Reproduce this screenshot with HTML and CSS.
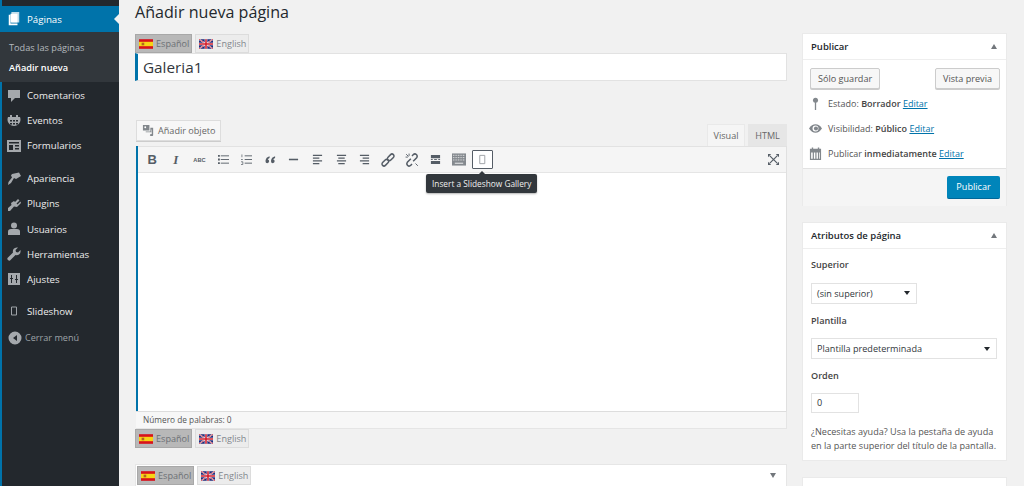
FILE: index.html
```html
<!DOCTYPE html>
<html lang="es">
<head>
<meta charset="utf-8">
<title>Añadir nueva página</title>
<link rel="stylesheet" href="styles.css">
</head>
<body>
<svg class="defs" width="0" height="0" aria-hidden="true">
  <symbol id="flag-es" viewBox="0 0 16 11"><rect width="16" height="11" fill="#d8121b"/><rect y="3" width="16" height="5" fill="#f7d316"/><rect x="3" y="4" width="3" height="3" fill="#b5651d"/></symbol>
  <symbol id="flag-en" viewBox="0 0 16 11"><rect width="16" height="11" rx="1.500" fill="#1f2a7a"/><path d="M0 0l16 11M16 0L0 11" stroke="#fff" stroke-width="1.500"/><path d="M0 0l16 11M16 0L0 11" stroke="#d01c2a" stroke-width=".8"/><path d="M8 0v11M0 5.500h16" stroke="#fff" stroke-width="3"/><path d="M8 0v11M0 5.500h16" stroke="#d01c2a" stroke-width="1.800"/></symbol>
</svg>
<div class="page">
  <nav class="side">
    <div class="active"><svg class="ic" viewBox="0 0 14 16"><path d="M4 0h9v12H4z" fill="#fff" opacity=".75"/><path d="M1 3h2v10h8v2H1z" fill="#fff"/><path d="M3 2h8v10H3z" fill="#fff"/></svg><span>Páginas</span></div>
    <div class="sub"><a>Todas las páginas</a><a class="cur">Añadir nueva</a></div>
    <div class="item"><svg class="ic" viewBox="0 0 14 14"><path d="M1 1h12v8H8l-4 4V9H1z"/></svg><span>Comentarios</span></div>
    <div class="item"><svg class="ic" viewBox="0 0 14 14"><path d="M3 1h2v2h4V1h2v2h2a6.500 6.500 0 1 1-12 0h2zM3 6v1.500h2V6zm3 0v1.500h2V6zm3 0v1.500h2V6zM3 9v1.500h2V9zm3 0v1.500h2V9zm3 0v1.500h2V9z" fill-rule="evenodd"/></svg><span>Eventos</span></div>
    <div class="item"><svg class="ic" viewBox="0 0 14 14"><path d="M0 1h14v12H0zm2 2v1.500h10V3zm0 3v5h4V6zm6 0v1.500h4V6zm0 3v1.500h4V9z" fill-rule="evenodd"/></svg><span>Formularios</span></div>
    <div class="item gap"><svg class="ic" viewBox="0 0 14 14"><path d="M5 2l7-1.500L14 4 9 7 7 6 4 11 1 13l.5-3 3.500-4.500-1-2z"/></svg><span>Apariencia</span></div>
    <div class="item"><svg class="ic" viewBox="0 0 14 14"><path d="M7 4l1 1 3-3 1.500 1.500-3 3 1 1 3-3L14 6l-3 3-1 1-3-.5L3 14H1v-3l3.500-3L4 6z"/></svg><span>Plugins</span></div>
    <div class="item"><svg class="ic" viewBox="0 0 14 14"><circle cx="7" cy="3.500" r="3"/><path d="M1 13V9.500Q1 7 4 7h6q3 0 3 2.500V13z"/></svg><span>Usuarios</span></div>
    <div class="item"><svg class="ic" viewBox="0 0 14 14"><path d="M13.500 3L11 5.500 9 5l-.5-2L11 .5Q8 0 6.500 2 5.500 4 6 5.500L.5 11q-.5 1 .5 2t2 .5L8.500 8q2 .5 3.500-.5 2-1.500 1.500-4.500z"/></svg><span>Herramientas</span></div>
    <div class="item"><svg class="ic" viewBox="0 0 14 14"><path d="M1 1h12v12H1zm3 2v3H3v1h1v4h1V7h1V6H5V3zm5 0v4H8v1h1v3h1V8h1V7h-1V3z" fill-rule="evenodd"/></svg><span>Ajustes</span></div>
    <div class="item gap-last"><svg class="ic" viewBox="0 0 14 14"><path d="M4.500 3h5v8h-5z" fill="none" stroke="#9ea3a8"/></svg><span>Slideshow</span></div>
    <div class="collapse"><svg class="ic" viewBox="0 0 14 14"><path d="M7 .5a6.500 6.500 0 1 1 0 13 6.500 6.500 0 0 1 0-13zM9 4L5 7l4 3z" fill-rule="evenodd"/></svg><span>Cerrar menú</span></div>
  </nav>

  <main class="main">
    <section class="left">
      <h1>Añadir nueva página</h1>
      <div class="langs">
        <span class="lang on"><svg class="flag"><use href="#flag-es"/></svg>Español</span>
        <span class="lang"><svg class="flag"><use href="#flag-en"/></svg>English</span>
      </div>
      <div class="title-input">Galeria1</div>
      <div class="editor-top">
        <span class="btn-media"><svg class="media-ic" viewBox="0 0 14 14"><path d="M1 1h7v6H1zM4 8h5V4h3v8q0 1-2 1t-1.500-1.200T10.500 11V6H10v3H4z" fill="#82878c"/><circle cx="3.500" cy="3.500" r="1" fill="#fff"/></svg>Añadir objeto</span>
        <div class="tabs"><span class="tab tab-on">Visual</span><span class="tab tab-html">HTML</span></div>
      </div>
      <div class="editor">
        <div class="toolbar">
          <span class="tb tb-b">B</span>
          <span class="tb tb-i">I</span>
          <span class="tb tb-abc">ABC</span>
          <span class="tb"><svg viewBox="0 0 12 12"><path d="M3 2h9M3 6h9M3 10h9" stroke="#555d66"/><path d="M0 2h2M0 6h2M0 10h2" stroke="#555d66" stroke-width="2"/></svg></span>
          <span class="tb"><svg viewBox="0 0 12 12"><path d="M4 2h8M4 6h8M4 10h8" stroke="#555d66"/><path d="M1 .5v3M0 6h2M0 8.500h2v3H0" stroke="#555d66" fill="none" stroke-width=".8"/></svg></span>
          <span class="tb"><svg viewBox="0 0 12 12"><path d="M5 2.500Q1 3.500.5 7.500q0 2.500 2 2.500T4.500 8 3 6q.3-1 2-1.700zM11 2.500Q7 3.500 6.500 7.500q0 2.500 2 2.500t2-2-1.500-2q.3-1 2-1.700z" fill="#555d66"/></svg></span>
          <span class="tb"><svg viewBox="0 0 12 12"><path d="M1 6h10" stroke="#555d66" stroke-width="1.700"/></svg></span>
          <span class="tb"><svg viewBox="0 0 12 12"><path d="M1 1.500h10M1 4.500h7M1 7.500h10M1 10.500h7" stroke="#555d66" stroke-width="1.200"/></svg></span>
          <span class="tb"><svg viewBox="0 0 12 12"><path d="M1 1.500h10M2.500 4.500h7M1 7.500h10M2.500 10.500h7" stroke="#555d66" stroke-width="1.200"/></svg></span>
          <span class="tb"><svg viewBox="0 0 12 12"><path d="M1 1.500h10M4 4.500h7M1 7.500h10M4 10.500h7" stroke="#555d66" stroke-width="1.200"/></svg></span>
          <span class="tb"><svg class="tb-lg" viewBox="0 0 12 12"><g fill="none" stroke="#555d66" stroke-width="1.300"><rect x="-3" y="-1.700" width="6.500" height="3.400" rx="1.700" transform="translate(3.500 8.500) rotate(-45)"/><rect x="-3.500" y="-1.700" width="6.500" height="3.400" rx="1.700" transform="translate(8.500 3.500) rotate(-45)"/></g></svg></span>
          <span class="tb"><svg class="tb-lg" viewBox="0 0 12 12"><g fill="none" stroke="#555d66" stroke-width="1.300"><path d="M5 5L2 8q-1 1.500.3 2.700t2.700-.2l1-1"/><path d="M7 7l3-3q1-1.500-.3-2.700T7 1.500l-1 1"/></g><path d="M1 1l2 2M.5 3.500h2M3.500.5v2M9 9l2 2" stroke="#555d66" stroke-width=".8"/></svg></span>
          <span class="tb"><svg viewBox="0 0 12 12"><path d="M1 1h10v3.500H1zM1 7.500h10V11H1z" fill="#555d66"/><path d="M1 6h2M4.500 6h3M9 6h2" stroke="#555d66"/></svg></span>
          <span class="tb"><svg class="tb-wide" viewBox="0 0 15 13"><path d="M0 0h15v13H0z" fill="#84898e"/><path d="M1 2h13M1 4.500h13M1 7h13" stroke="#f5f5f5" stroke-dasharray="1 .8" stroke-width=".9"/><path d="M3 10.500h9" stroke="#f5f5f5"/></svg></span>
          <span class="tb tb-slide"><svg viewBox="0 0 12 12"><path d="M3 1.500h5.500v9H3z" fill="none" stroke="#9a9ea3"/></svg></span>
          <span class="tb tb-full"><svg viewBox="0 0 12 12"><path d="M0 0h3.500L0 3.500zM12 0v3.500L8.500 0zM0 12V8.500L3.500 12zM12 12H8.500L12 8.500z" fill="#555d66"/><path d="M2 2l8 8M10 2l-8 8" stroke="#555d66" stroke-width="1.300"/></svg></span>
          <span class="tooltip">Insert a Slideshow Gallery</span>
        </div>
        <div class="editor-body"></div>
      </div>
      <div class="status">Número de palabras: 0</div>
      <div class="langs">
        <span class="lang on"><svg class="flag"><use href="#flag-es"/></svg>Español</span>
        <span class="lang"><svg class="flag"><use href="#flag-en"/></svg>English</span>
      </div>
      <div class="meta-box">
        <div class="langs">
          <span class="lang on"><svg class="flag"><use href="#flag-es"/></svg>Español</span>
          <span class="lang"><svg class="flag"><use href="#flag-en"/></svg>English</span>
        </div>
        <span class="tri-down"></span>
      </div>
    </section>

    <aside class="right">
      <div class="box pub">
        <div class="box-h"><span>Publicar</span><span class="tri-up"></span></div>
        <div class="pub-btns"><span class="btn">Sólo guardar</span><span class="btn">Vista previa</span></div>
        <div class="row"><svg class="ric" viewBox="0 0 14 14"><circle cx="7" cy="3.500" r="2.700" fill="#82878c"/><path d="M6.300 5h1.400v9H6.300z" fill="#82878c"/></svg><span>Estado: <b>Borrador</b> <a>Editar</a></span></div>
        <div class="row"><svg class="ric" viewBox="0 0 14 14"><path d="M0 7q3-4.500 7-4.500T14 7q-3 4.500-7 4.500T0 7z" fill="#82878c"/><circle cx="7" cy="7" r="3.200" fill="#fff"/><circle cx="7.500" cy="7" r="2.200" fill="#82878c"/></svg><span>Visibilidad: <b>Público</b> <a>Editar</a></span></div>
        <div class="row"><svg class="ric" viewBox="0 0 14 14"><path d="M1 2h2V.500h1.500V2h5V.500H11V2h2v12H1zm1.300 4v6.700h1.700V6zm3 0v6.700h1.500V6zm2.800 0v6.700h1.500V6zm2.800 0v6.700h.8V6z" fill="#82878c" fill-rule="evenodd"/></svg><span>Publicar <b>inmediatamente</b> <a>Editar</a></span></div>
        <div class="pub-foot"><span class="btn-primary">Publicar</span></div>
      </div>
      <div class="box attrs">
        <div class="box-h"><span>Atributos de página</span><span class="tri-up"></span></div>
        <div class="attrs-body">
          <p class="lbl">Superior</p>
          <div class="sel sel-s"><span>(sin superior)</span><i></i></div>
          <p class="lbl">Plantilla</p>
          <div class="sel sel-l"><span>Plantilla predeterminada</span><i></i></div>
          <p class="lbl">Orden</p>
          <div class="num">0</div>
          <p class="help">¿Necesitas ayuda? Usa la pestaña de ayuda en la parte superior del título de la pantalla.</p>
        </div>
      </div>
      <div class="box stub"></div>
    </aside>
  </main>
</div>
</body>
</html>
```
FILE: styles.css
```css
* { box-sizing: border-box; }
html, body { margin: 0; height: 486px; overflow: hidden; }
body { background: #f1f1f1; font-family: "Open Sans", sans-serif; font-size: 9.100px; color: #444; }
.defs { position: absolute; }
.page { display: flex; height: 486px; overflow: hidden; }

.side { width: 119px; flex: none; background: #23282d; border-left: 2px solid #0073aa; padding-top: 6px; color: #eee; font-size: 9.700px; }
.side .ic { width: 14px; height: 14px; fill: #a4a8ac; flex: none; }
.active, .item { display: flex; align-items: center; gap: 6px; padding-left: 5px; }
.active { height: 26px; background: #0073aa; color: #fff; position: relative; margin-left: -2px; padding-left: 7px; }
.active::after { content: ""; position: absolute; right: 0; top: 8px; border: 5px solid transparent; border-right-color: #f1f1f1; border-left-width: 0; }
.sub { background: #32373c; height: 50px; margin-bottom: 1px; padding: 5px 0 5px 9px; font-size: 9.200px; margin-left: -2px; }
.sub a { display: flex; align-items: center; height: 20px; color: #b4b9be; text-decoration: none; }
.sub .cur { color: #fff; font-weight: 600; }
.item { height: 25.200px; }
.gap { margin-top: 7.500px; }
.gap-last { margin-top: 6.500px; }
.collapse { display: flex; align-items: center; gap: 3px; height: 26px; padding-left: 6px; font-size: 9.100px; color: #9ea3a8; margin-top: 1px; }

.main { flex: 1; min-width: 0; display: flex; padding-left: 16px; }
.left { width: 652px; flex: none; }
h1 { margin: 0; height: 34px; padding-top: 1px; font-size: 16.100px; line-height: 23px; font-weight: 400; color: #23282d; }
.langs { display: flex; gap: 3px; height: 19px; }
.lang { display: flex; align-items: center; gap: 3px; padding: 0 2px 0 3px; border: 1px solid #dcdcdc; background: #ececec; color: #82878c; font-size: 9.100px; }
.lang.on { background: #b8b8b8; border-color: #a8a8a8; color: #6c7075; }
.flag { width: 14px; height: 10px; flex: none; }
.title-input { height: 28px; background: #fff; border: 1px solid #e2e2e2; border-left: 3px solid #0073aa; padding-left: 5px; font-size: 15.300px; line-height: 26px; color: #32373c; }
.editor-top { display: flex; justify-content: space-between; align-items: flex-end; margin-top: 40px; height: 25px; }
.btn-media { display: flex; align-items: center; gap: 3px; height: 21px; margin: 0 0 5px 1px; padding: 0 5px; border: 1px solid #ddd; background: #f7f7f7; box-shadow: 0 1px 0 #ccc; color: #666; font-size: 9.100px; }
.media-ic { width: 13px; height: 13px; }
.tabs { display: flex; align-items: flex-end; gap: 3px; }
.tab { display: flex; align-items: center; justify-content: center; height: 22px; color: #666; font-size: 9.100px; }
.tab-html { width: 39px; background: #e6e6e6; }
.tab-on { width: 38px; background: #f5f5f5; border: 1px solid #e9e9e9; border-bottom: 0; }
.editor { border-left: 2px solid #0073aa; margin-left: 1px; border-right: 1px solid #e0e0e0; }
.toolbar { display: flex; align-items: center; height: 27px; padding-left: 2.500px; background: #f5f5f5; border-top: 1px solid #e2e2e2; border-bottom: 1px solid #e5e5e5; position: relative; }
.tb { display: flex; align-items: center; justify-content: center; width: 23.600px; height: 19px; flex: none; color: #555d66; }
.tb svg { width: 11px; height: 11px; }
.tb .tb-lg { width: 14px; height: 14px; }
.tb .tb-wide { width: 14px; height: 13px; }
.tb-b { font: 700 13px "Liberation Sans", sans-serif; }
.tb-i { font: italic 700 13px "Liberation Serif", serif; }
.tb-abc { font: 700 5.700px "Liberation Sans", sans-serif; }
.tb-slide { width: 21px; height: 19px; margin-left: 1.500px; background: #fff; border: 1px solid #555d66; border-radius: 1px; }
.tb-full { margin-left: auto; margin-right: 1px; }
.tooltip { position: absolute; left: 288px; top: 27px; height: 19px; padding: 0 6px; display: flex; align-items: center; white-space: nowrap; background: #32373c; color: #eee; font-size: 8.300px; border-radius: 2px; box-shadow: 0 1px 2px rgba(0,0,0,.3); }
.tooltip::before { content: ""; position: absolute; left: 50%; margin-left: -3px; top: -3px; border: 3px solid transparent; border-bottom-color: #32373c; border-top-width: 0; }
.editor-body { height: 238px; background: #fff; }
.status { height: 18px; margin-left: 1px; padding-left: 7px; background: #f7f7f7; border: 1px solid #e5e5e5; border-top-color: #ddd; border-left: 0; font-size: 8.300px; line-height: 15px; color: #555; }
.meta-box { display: flex; align-items: center; justify-content: space-between; height: 22px; margin-top: 16px; padding: 0 10px 0 1px; background: #fff; border: 1px solid #e6e6e6; border-bottom: 0; }
.tri-down { border: 3.500px solid transparent; border-top: 5px solid #72777c; border-bottom-width: 0; }

.right { width: 205px; flex: none; margin-left: 15px; padding-top: 33px; }
.box { background: #fff; border: 1px solid #eaeaea; margin-bottom: 16px; }
.box-h { display: flex; justify-content: space-between; align-items: center; height: 26px; padding: 0 9px 0 8px; border-bottom: 1px solid #eee; font-size: 9.500px; font-weight: 600; color: #23282d; }
.tri-up { border: 3px solid transparent; border-bottom: 5px solid #72777c; border-top-width: 0; }
.pub { height: 173px; }
.pub-btns { display: flex; justify-content: space-between; padding: 8px 6px 0 7px; }
.btn { display: flex; align-items: center; height: 21px; padding: 0 7px; background: #f7f7f7; border: 1px solid #ccc; box-shadow: 0 1px 0 #ccc; border-radius: 2px; color: #555; font-size: 9.100px; }
.row { display: flex; align-items: center; gap: 6px; height: 25px; padding-left: 6px; color: #555; font-size: 9px; }
.pub-btns + .row { margin-top: 1.500px; }
.ric { width: 13px; height: 13px; flex: none; }
.row b { font-weight: 600; color: #444; }
a { color: #0073aa; text-decoration: underline; }
.pub-foot { display: flex; justify-content: flex-end; height: 38px; margin-top: 2px; padding: 7px 6px 0 0; background: #f5f5f5; border-top: 1px solid #e2e2e2; }
.btn-primary { display: flex; align-items: center; justify-content: center; width: 53px; height: 23px; background: #0085ba; border-radius: 2px; border-bottom: 1px solid #006799; color: #fff; font-size: 9.100px; }
.attrs { height: 239px; }
.attrs-body { padding: 6px 3px 0 8px; }
.lbl { margin: 0; height: 19px; font-weight: 600; line-height: 19px; color: #444; }
.sel { display: flex; justify-content: space-between; align-items: center; height: 21px; margin: 8.500px 0 7px; padding: 0 6px 0 5px; background: #fff; border: 1px solid #e2e2e2; color: #32373c; }
.sel i { border: 3px solid transparent; border-top: 4px solid #23282d; border-bottom-width: 0; }
.sel-s { width: 106px; }
.sel-l { width: 186px; }
.num { width: 48px; height: 20px; margin-top: 8px; padding-left: 5px; border: 1px solid #e2e2e2; line-height: 18px; color: #32373c; }
.help { margin: 12px 0 0; font-size: 9.100px; line-height: 14px; color: #555; }
.stub { height: 40px; margin: 0; }
```
